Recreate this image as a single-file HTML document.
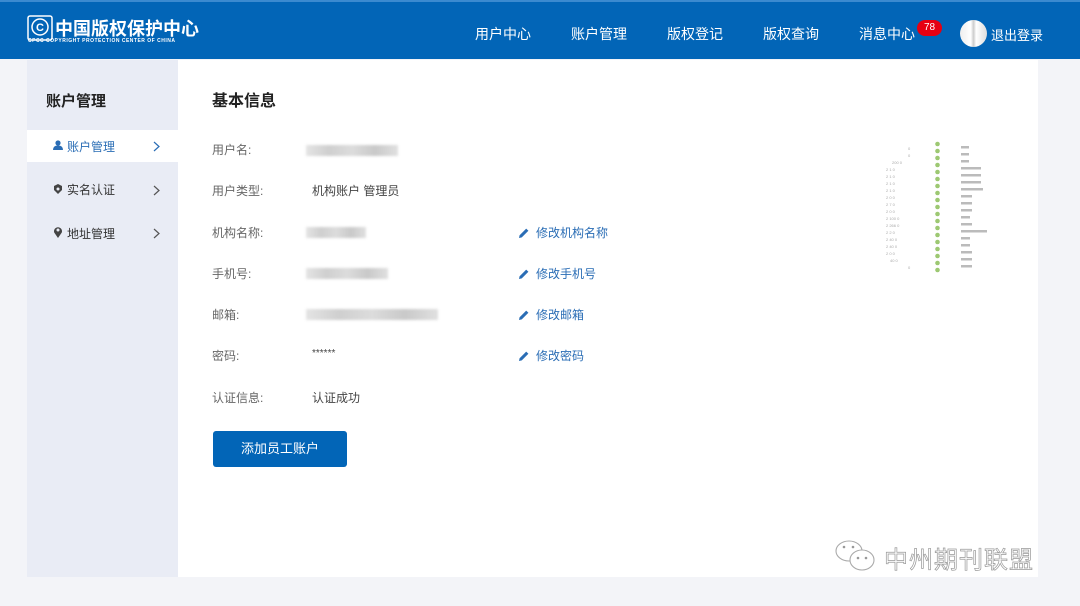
<!DOCTYPE html>
<html><head><meta charset="utf-8">
<style>
*{margin:0;padding:0;box-sizing:border-box}
body{width:1080px;height:606px;background:#f3f4f8;font-family:"Liberation Sans","Noto Sans CJK SC",sans-serif;position:relative;overflow:hidden;color:#333}
.hdr{position:absolute;left:0;top:0;width:1080px;height:59px;background:#0265b7;border-top:2px solid #3b8ad0}
.nav{position:absolute;top:22px;color:#fff;font-size:14px}
.side{position:absolute;left:27px;top:60px;width:151px;height:517px;background:#e9ecf5}
.main{position:absolute;left:178px;top:60px;width:860px;height:517px;background:#fff}
.abs{position:absolute}
.lbl{position:absolute;left:212px;font-size:12px;color:#666}
.val{position:absolute;left:312px;font-size:12px;color:#444}
.blur{position:absolute;height:11px;background:linear-gradient(90deg,#e4e4e4,#cfcfcf,#dcdcdc,#c9c9c9,#e0e0e0);filter:blur(1.2px)}
.lnk{position:absolute;left:518px;font-size:12px;color:#2a6db5}
.lnk svg{vertical-align:-2px;margin-right:6px}
.si{position:absolute;left:52px;font-size:12px;color:#333}
.chev{position:absolute;left:153px}
</style></head><body>
<div class="hdr">
 <svg class="abs" style="left:27px;top:13px" width="26" height="28" viewBox="0 0 26 28"><rect x="1" y="1" width="24" height="24" rx="2" fill="none" stroke="#fff" stroke-width="1.5"/><circle cx="13" cy="12" r="8" fill="none" stroke="#fff" stroke-width="1.5"/><text x="13" y="16" font-size="11" fill="#fff" text-anchor="middle" font-family="Liberation Sans" font-weight="bold">C</text></svg>
 <div class="abs" style="left:55px;top:13px;color:#fff;font-size:18px;font-weight:bold;letter-spacing:0px">中国版权保护中心</div>
 <div class="abs" style="left:28px;top:36px;color:#fff;font-size:5px;letter-spacing:0.5px;font-weight:bold">CPCC COPYRIGHT PROTECTION CENTER OF CHINA</div>
 <div class="nav" style="left:475px">用户中心</div>
 <div class="nav" style="left:571px">账户管理</div>
 <div class="nav" style="left:667px">版权登记</div>
 <div class="nav" style="left:763px">版权查询</div>
 <div class="nav" style="left:859px">消息中心</div>
 <div class="abs" style="left:917px;top:18px;width:25px;height:16px;border-radius:8px;background:#e60012;color:#fff;font-size:10px;text-align:center;line-height:16px">78</div>
 <div class="abs" style="left:960px;top:18px;width:27px;height:27px;border-radius:50%;background:linear-gradient(90deg,#eee,#fff 40%,#ccc 50%,#fff 60%,#ddd)"></div>
 <div class="nav" style="left:991px;font-size:13px;top:23px">退出登录</div>
</div>
<div class="side">
 <div class="abs" style="left:19px;top:30px;font-size:15px;font-weight:bold;color:#222">账户管理</div>
 <div class="abs" style="left:0;top:70px;width:151px;height:32px;background:#fff"></div>
</div>
<svg class="abs" style="left:53px;top:140px" width="10" height="10" viewBox="0 0 10 10"><circle cx="5" cy="3" r="2.6" fill="#2a6db5"/><path d="M0 10 Q0 5.5 5 5.5 Q10 5.5 10 10Z" fill="#2a6db5"/></svg>
<div class="si" style="left:67px;top:138px;color:#2a6db5">账户管理</div>
<svg class="chev" style="top:141px" width="7" height="11" viewBox="0 0 7 11"><path d="M1 1 L6 5.5 L1 10" fill="none" stroke="#2a6db5" stroke-width="1.2"/></svg>
<svg class="abs" style="left:53px;top:184px" width="10" height="10" viewBox="0 0 10 10"><path d="M5 0 L9 2 L9 6 L5 10 L1 6 L1 2Z" fill="#444"/><circle cx="5" cy="5" r="1.5" fill="#e9ecf5"/></svg>
<div class="si" style="left:67px;top:181px">实名认证</div>
<svg class="chev" style="top:185px" width="7" height="11" viewBox="0 0 7 11"><path d="M1 1 L6 5.5 L1 10" fill="none" stroke="#555" stroke-width="1.2"/></svg>
<div class="abs"></div>
<svg class="abs" style="left:53px;top:226px" width="10" height="12" viewBox="0 0 10 12"><path d="M5 12 L1.2 6.5 A4 4 0 1 1 8.8 6.5Z" fill="#444"/><circle cx="5" cy="4" r="1.5" fill="#e9ecf5"/></svg>
<div class="si" style="left:67px;top:225px">地址管理</div>
<svg class="chev" style="top:228px" width="7" height="11" viewBox="0 0 7 11"><path d="M1 1 L6 5.5 L1 10" fill="none" stroke="#555" stroke-width="1.2"/></svg>
<div class="main"></div>
<div class="abs" style="left:212px;top:87px;font-size:16px;font-weight:bold;color:#222">基本信息</div>
<div class="lbl" style="top:141px">用户名:</div><div class="blur" style="left:306px;top:145px;width:92px"></div>
<div class="lbl" style="top:182px">用户类型:</div><div class="val" style="top:182px">机构账户 管理员</div>
<div class="lbl" style="top:224px">机构名称:</div><div class="blur" style="left:306px;top:227px;width:60px"></div>
<div class="lnk" style="top:224px"><svg width="12" height="12" viewBox="0 0 12 12"><path d="M1 11 L1.6 8.2 L8.2 1.6 L10.4 3.8 L3.8 10.4Z" fill="#2a6db5"/></svg>修改机构名称</div>
<div class="lbl" style="top:265px">手机号:</div><div class="blur" style="left:306px;top:268px;width:82px"></div>
<div class="lnk" style="top:265px"><svg width="12" height="12" viewBox="0 0 12 12"><path d="M1 11 L1.6 8.2 L8.2 1.6 L10.4 3.8 L3.8 10.4Z" fill="#2a6db5"/></svg>修改手机号</div>
<div class="lbl" style="top:306px">邮箱:</div><div class="blur" style="left:306px;top:309px;width:132px"></div>
<div class="lnk" style="top:306px"><svg width="12" height="12" viewBox="0 0 12 12"><path d="M1 11 L1.6 8.2 L8.2 1.6 L10.4 3.8 L3.8 10.4Z" fill="#2a6db5"/></svg>修改邮箱</div>
<div class="lbl" style="top:347px">密码:</div><div class="val" style="top:348px;font-size:10px">******</div>
<div class="lnk" style="top:347px"><svg width="12" height="12" viewBox="0 0 12 12"><path d="M1 11 L1.6 8.2 L8.2 1.6 L10.4 3.8 L3.8 10.4Z" fill="#2a6db5"/></svg>修改密码</div>
<div class="lbl" style="top:389px">认证信息:</div><div class="val" style="top:389px">认证成功</div>
<div class="abs" style="left:213px;top:431px;width:134px;height:36px;background:#0265b7;border-radius:3px;color:#fff;font-size:13px;text-align:center;line-height:36px">添加员工账户</div>
<svg class="abs" style="left:880px;top:140px" width="110" height="135" viewBox="0 0 110 135">
 <g fill="#8cbf5a" opacity="0.85"><circle cx="57.5" cy="4" r="2.3"/><circle cx="57.5" cy="11" r="2.3"/><circle cx="57.5" cy="18" r="2.3"/><circle cx="57.5" cy="25" r="2.3"/><circle cx="57.5" cy="32" r="2.3"/><circle cx="57.5" cy="39" r="2.3"/><circle cx="57.5" cy="46" r="2.3"/><circle cx="57.5" cy="53" r="2.3"/><circle cx="57.5" cy="60" r="2.3"/><circle cx="57.5" cy="67" r="2.3"/><circle cx="57.5" cy="74" r="2.3"/><circle cx="57.5" cy="81" r="2.3"/><circle cx="57.5" cy="88" r="2.3"/><circle cx="57.5" cy="95" r="2.3"/><circle cx="57.5" cy="102" r="2.3"/><circle cx="57.5" cy="109" r="2.3"/><circle cx="57.5" cy="116" r="2.3"/><circle cx="57.5" cy="123" r="2.3"/><circle cx="57.5" cy="130" r="2.3"/></g>
 <g fill="#aaa" font-size="4" font-family="Liberation Sans">
  <text x="28" y="10">0</text><text x="28" y="17">0</text><text x="12" y="24">200 0</text><text x="6" y="31">2 1  0</text><text x="6" y="38">2 1  0</text><text x="6" y="45">2 1  0</text><text x="6" y="52">2 1  0</text><text x="6" y="59">2 0  0</text><text x="6" y="66">2 7  0</text><text x="6" y="73">2 0  0</text><text x="6" y="80">2 100 0</text><text x="6" y="87">2 266 0</text><text x="6" y="94">2 2  0</text><text x="6" y="101">2 40 0</text><text x="6" y="108">2 40 0</text><text x="6" y="115">2 0  0</text><text x="10" y="122">40 0</text><text x="28" y="129">0</text>
 </g>
 <g fill="#bbb"><rect x="81" y="6" width="8" height="2.5"/><rect x="81" y="13" width="8" height="2.5"/><rect x="81" y="20" width="8" height="2.5"/><rect x="81" y="27" width="20" height="2.5"/><rect x="81" y="34" width="20" height="2.5"/><rect x="81" y="41" width="20" height="2.5"/><rect x="81" y="48" width="22" height="2.5"/><rect x="81" y="55" width="11" height="2.5"/><rect x="81" y="62" width="11" height="2.5"/><rect x="81" y="69" width="11" height="2.5"/><rect x="81" y="76" width="9" height="2.5"/><rect x="81" y="83" width="11" height="2.5"/><rect x="81" y="90" width="26" height="2.5"/><rect x="81" y="97" width="9" height="2.5"/><rect x="81" y="104" width="9" height="2.5"/><rect x="81" y="111" width="11" height="2.5"/><rect x="81" y="118" width="11" height="2.5"/><rect x="81" y="125" width="11" height="2.5"/></g>
</svg>
<svg class="abs" style="left:834px;top:538px" width="45" height="38" viewBox="0 0 45 38"><g fill="#fff" stroke="#aaa" stroke-width="1.1"><ellipse cx="15" cy="13" rx="13" ry="10"/><ellipse cx="28" cy="22" rx="12" ry="10"/></g><g fill="#999"><circle cx="10" cy="9" r="1.3"/><circle cx="19" cy="9" r="1.3"/><circle cx="24" cy="20" r="1.3"/><circle cx="32" cy="20" r="1.3"/></g></svg>
<div class="abs" style="left:884px;top:540px;font-size:24px;color:#fff;-webkit-text-stroke:0.7px #999;letter-spacing:1px">中州期刊联盟</div>
</body></html>
